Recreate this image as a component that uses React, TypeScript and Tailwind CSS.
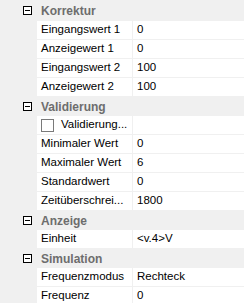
type Row = { name: string; value: string; check?: boolean };
type Section = { title: string; rows: Row[] };

const sections: Section[] = [
  {
    title: "Korrektur",
    rows: [
      { name: "Eingangswert 1", value: "0" },
      { name: "Anzeigewert 1", value: "0" },
      { name: "Eingangswert 2", value: "100" },
      { name: "Anzeigewert 2", value: "100" },
    ],
  },
  {
    title: "Validierung",
    rows: [
      { name: "Validierung...", value: "", check: true },
      { name: "Minimaler Wert", value: "0" },
      { name: "Maximaler Wert", value: "6" },
      { name: "Standardwert", value: "0" },
      { name: "Zeitüberschrei...", value: "1800" },
    ],
  },
  {
    title: "Anzeige",
    rows: [{ name: "Einheit", value: "<v.4>V" }],
  },
  {
    title: "Simulation",
    rows: [
      { name: "Frequenzmodus", value: "Rechteck" },
      { name: "Frequenz", value: "0" },
    ],
  },
];

function MinusBox() {
  return (
    <span className="relative block h-[9px] w-[9px] border border-black bg-white">
      <span className="absolute left-[1px] top-[3px] h-px w-[5px] bg-black" />
    </span>
  );
}

function Header({ title, first }: { title: string; first?: boolean }) {
  return (
    <div className={`flex items-center bg-[#f0f0f0] ${first ? "h-[21px]" : "h-[19px]"}`}>
      <div className="flex w-[37px] justify-end pr-[5px]">
        <MinusBox />
      </div>
      <span className="pl-[4px] text-[12px] font-bold text-[#6d6d6d]">{title}</span>
    </div>
  );
}

function PropRow({ row }: { row: Row }) {
  return (
    <div className="flex h-[19px] bg-[#f0f0f0]">
      <div className="w-[37px] shrink-0" />
      <div className="flex h-[18px] flex-1 bg-white">
        <div className="flex w-[95px] shrink-0 items-center overflow-hidden whitespace-nowrap pl-[4px] text-[11.5px] text-black">
          {row.check && (
            <span className="mr-[7px] block h-[13px] w-[13px] shrink-0 border border-[#7a7a7a] bg-white" />
          )}
          {row.name}
        </div>
        <div className="w-px bg-[#f0f0f0]" />
        <div className="flex flex-1 items-center overflow-hidden whitespace-nowrap pl-[4px] text-[11.5px] text-black">
          {row.value}
        </div>
      </div>
    </div>
  );
}

export default function App() {
  return (
    <div
      className="h-[303px] w-[244px] overflow-hidden bg-[#f0f0f0]"
      style={{ fontFamily: '"Liberation Sans", Arial, sans-serif' }}
    >
      {sections.map((s, i) => (
        <div key={s.title}>
          <Header title={s.title} first={i === 0} />
          {s.rows.map((r) => (
            <PropRow key={r.name} row={r} />
          ))}
        </div>
      ))}
    </div>
  );
}
